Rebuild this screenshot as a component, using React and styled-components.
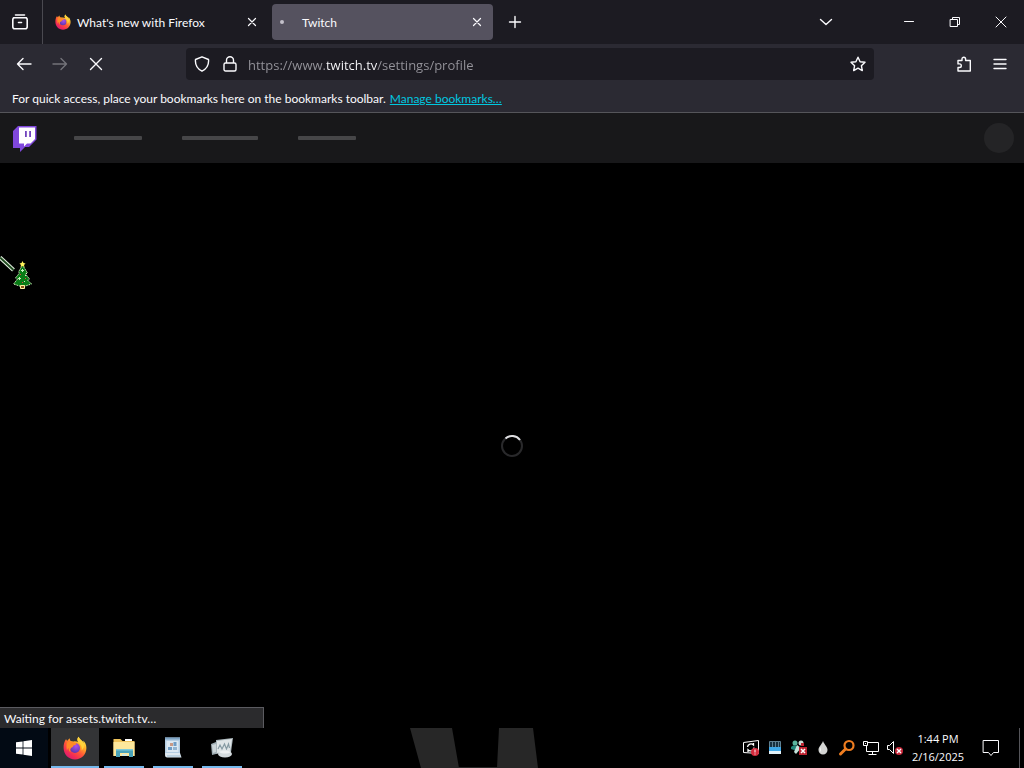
import React from 'react';
import styled, { createGlobalStyle, css } from 'styled-components';

const GlobalStyle = createGlobalStyle`
  *, *::before, *::after { box-sizing: border-box; }
  html, body { margin: 0; background: #000; }
  body, button, input {
    font-family: Lato, "Open Sans", sans-serif;
    font-size: 12px;
    line-height: 16px;
    color: #fbfbfe;
  }
  svg { display: block; flex: none; }
`;

const Desktop = styled.div`
  display: flex;
  flex-direction: column;
  min-height: 100vh;
`;

const IconButton = styled.button`
  display: flex;
  align-items: center;
  justify-content: center;
  flex: none;
  width: ${(p) => p.$w || 32}px;
  height: ${(p) => p.$h || 32}px;
  padding: 0;
  border: 0;
  border-radius: 4px;
  background: transparent;
  color: #fbfbfe;
  &:disabled { color: #74737a; }
`;

/* Title bar */
const TitleBar = styled.header`
  display: flex;
  align-items: center;
  height: 44px;
  background: #1c1b22;
`;

const ViewSlot = styled.div`
  display: flex;
  align-items: center;
  align-self: stretch;
  padding: 0 6px 0 4px;
  border-right: 1px solid #4a4950;
`;

const TabList = styled.div`
  display: flex;
  gap: 4px;
  padding: 0 6px 0 4px;
`;

const Tab = styled.div`
  display: flex;
  align-items: center;
  width: 221px;
  height: 36px;
  padding: 0 4px 0 8px;
  border-radius: 4px;
  background: ${(p) => (p.$active ? '#55525f' : 'transparent')};
`;

const TabIcon = styled.span`
  display: flex;
  width: 16px;
  height: 16px;
  margin-right: 6px;
`;

const TabTitle = styled.span`
  flex: 1;
  padding-top: 1px;
  white-space: nowrap;
`;

const WindowControls = styled.div`
  display: flex;
  margin-left: 44px;
`;

const Spacer = styled.div`
  flex: 1;
`;

/* Navigation bar */
const NavBar = styled.nav`
  display: flex;
  align-items: center;
  gap: 4px;
  height: 40px;
  padding: 0 8px;
  background: #2b2a33;
`;

const UrlBar = styled.label`
  display: flex;
  align-items: center;
  flex: 1;
  height: 32px;
  margin: 0 70px;
  border-radius: 4px;
  background: #1c1b22;
`;

const UrlIcon = styled.span`
  display: flex;
  justify-content: center;
  width: ${(p) => p.$w}px;
`;

const UrlInput = styled.input`
  flex: 1;
  min-width: 0;
  height: 24px;
  padding: 2px 0 0;
  margin-left: 6px;
  border: 0;
  outline: 0;
  font-family: "Open Sans", sans-serif;
  font-size: 13px;
  background: linear-gradient(90deg, #96959c 78px, #fbfbfe 78px, #fbfbfe 129px, #96959c 129px);
  -webkit-background-clip: text;
  background-clip: text;
  -webkit-text-fill-color: transparent;
`;

const BookmarksBar = styled.div`
  display: flex;
  align-items: center;
  gap: 4px;
  height: 29px;
  padding: 1px 12px 0;
  background: #2b2a33;
  border-bottom: 1px solid #55555a;
  white-space: nowrap;
`;

const BookmarkLink = styled.a`
  color: #00c8e0;
  text-decoration: underline;
`;

/* Page */
const SiteHeader = styled.header`
  display: flex;
  align-items: center;
  height: 50px;
  padding: 0 10px 0 12px;
  background: #18181a;
`;

const Placeholders = styled.div`
  display: flex;
  gap: 40px;
  flex: 1;
  margin-left: 37px;
`;

const Placeholder = styled.div`
  width: ${(p) => p.$w}px;
  height: 4px;
  border-radius: 1px;
  background: #464648;
`;

const Avatar = styled.div`
  width: 30px;
  height: 30px;
  border-radius: 50%;
  background: #242426;
`;

const Page = styled.main`
  position: relative;
  display: flex;
  align-items: center;
  justify-content: center;
  flex: 1;
  background: #000;
`;

const Status = styled.div`
  position: absolute;
  left: 0;
  bottom: 0;
  width: 264px;
  padding: 3px 4px 1px;
  border: solid #5b5b60;
  border-width: 1px 1px 0 0;
  background: #2b2b2d;
`;

const Pointer = styled.svg`
  position: absolute;
  left: 0;
  top: 93px;
`;

/* Taskbar */
const Taskbar = styled.footer`
  display: grid;
  grid-template-columns: 40% 128px 1fr;
  height: 40px;
  background: #000;
`;

const Apps = styled.div`
  display: flex;
  gap: 1px;
`;

const AppButton = styled.button`
  display: flex;
  align-items: center;
  justify-content: center;
  width: 48px;
  height: 40px;
  padding: 0;
  border: 0;
  background: ${(p) => (p.$active ? '#333436' : 'transparent')};
  ${(p) => p.$start && css`
    margin-right: 2px;
    background: #020a14;
  `}
  ${(p) => p.$open && css`
    background-image: linear-gradient(#76b9ed, #76b9ed);
    background-repeat: no-repeat;
    background-position: center bottom;
    background-size: ${p.$active ? 48 : 40}px 2px;
  `}
`;

const Tray = styled.div`
  display: flex;
  align-items: center;
  justify-content: flex-end;
`;

const TrayClock = styled.time`
  width: 62px;
  text-align: center;
  font-family: "Open Sans", sans-serif;
  font-size: 11px;
  line-height: 18px;
  white-space: nowrap;
`;

const ShowDesktop = styled.button`
  width: 5px;
  height: 40px;
  margin-left: 6px;
  padding: 0;
  border: 0;
  border-left: 1px solid #55555a;
  background: transparent;
`;

const Line = ({ size = 16, width = 1.4, children, ...rest }) => (
  <svg width={size} height={size} viewBox={`0 0 ${size} ${size}`} fill="none" stroke="currentColor"
    strokeWidth={width} strokeLinecap="round" strokeLinejoin="round" aria-hidden="true" {...rest}>
    {children}
  </svg>
);

const FirefoxLogo = ({ size, id }) => (
  <svg width={size} height={size} viewBox="0 0 24 24" aria-hidden="true">
    <defs>
      <linearGradient id={`${id}-body`} x1="0.85" y1="0.05" x2="0.2" y2="0.95">
        <stop offset="0" stopColor="#fff44f" />
        <stop offset="0.3" stopColor="#ffad27" />
        <stop offset="0.55" stopColor="#ff5a36" />
        <stop offset="0.8" stopColor="#f32c55" />
        <stop offset="1" stopColor="#d91b72" />
      </linearGradient>
      <radialGradient id={`${id}-globe`} cx="0.6" cy="0.3" r="0.8">
        <stop offset="0" stopColor="#a950ee" />
        <stop offset="1" stopColor="#5634a5" />
      </radialGradient>
    </defs>
    <path fill={`url(#${id}-body)`} d="M15.6.8c-1.500 1.700-1.600 3.500-.5 5.200-1.200-.6-3-.9-4.500-.6L7.800 5C7 4.400 6.700 3.300 6.800 2.200 5.700 2.800 4.900 3.800 4.400 4.700 3.600 4.500 3.200 3.800 3.100 3 1.200 5.500.5 8.600.6 12c.1 6.500 5 11.500 11.400 11.500 6.500 0 11.400-5 11.400-11.500 0-3.400-1.500-6.100-3.400-7.500.4.900.6 1.800.6 2.500C19.400 4.300 16.500 3.600 15.600.8Z" />
    <circle cx="12" cy="12" r="5" fill={`url(#${id}-globe)`} />
    <path fill="#ff8a26" d="M4.200 6.200c2.200-.9 4.700-.6 6.500.6l2.600.5c.7.400-.1 1.500-1.900 1.900-1.300.4-1.800 1-1.400 1.700-1.400.2-2.500 1.300-2.800 2.600-.2.900 0 1.900.4 2.700-1.500-.9-2.200-2.400-1.900-4.200-1 .4-1.700 1.700-1.700 3.300C3.500 11.200 3.100 8.400 4.200 6.200Z" />
    <path fill="#ffd23c" d="M15.600.8c-1.500 1.700-1.600 3.700 0 5.700 2.400 2 3.800 4.700 3 8 2.700-2.400 3.100-6.300 2-7.500C19.400 4.300 16.500 3.600 15.600.8Z" />
  </svg>
);

const TwitchLogo = () => (
  <svg width="25" height="29" viewBox="0 0 25 29" role="img" aria-label="Twitch">
    <path fill="#8048dc" d="M6 2h18.500v13.500L17 23h-4l-5 5v-4H1V7Z" />
    <path fill="#fff" d="M7 3.500h16v11.500l-4.500 4.500H15l-3 3v-3H7Z" />
    <path fill="#7143bd" d="M13 7h1.800v6H13zM17.200 7H19v6h-1.800z" />
  </svg>
);

const TreePointer = () => (
  <Pointer width="36" height="36" viewBox="0 0 36 36" aria-hidden="true">
    <path d="M0 1.500 13.500 14" stroke="#e8f5e4" strokeWidth="4" />
    <path d="M0 1.500 13.500 14" stroke="#204a20" strokeWidth="2" />
    <path fill="#087c16" stroke="#e4f5cc" strokeWidth="1" strokeDasharray="1.500 1" d="m22.500 9 5 8-2 1 4 5-2 1 4 4-6 2h-6l-6-2 4-5-2-1 4-5-1-1Z" />
    <path fill="#fff35c" d="m22.500 5 1 2 2 .5-1.500 1.500.5 2-2-1-2 1 .5-2L19.500 7.500l2-.5Z" />
    <path fill="#8c5520" stroke="#fff2a0" d="M20.500 29.500h4v3h-4z" />
    <path fill="#c6f4bd" d="M22 13h1v3h-1zM21 14h3v1h-3zM19 21h1v3h-1zM18 22h3v1h-3zM25 19h1v1h-1zM24 25h1v1h-1z" />
    <path fill="#e23c3c" d="M20 18h1v1h-1zM25 22h1v1h-1zM22 26h1v1h-1z" />
  </Pointer>
);

const Spinner = () => (
  <svg width="24" height="24" viewBox="0 0 24 24" fill="none" role="img" aria-label="Loading">
    <circle cx="12" cy="12" r="10" stroke="#29292b" strokeWidth="2" />
    <path d="M5.500 4.400A10 10 0 0 1 20 6" stroke="#dedee0" strokeWidth="2" />
  </svg>
);

const WindowsLogo = () => (
  <svg width="16" height="16" viewBox="0 0 16 16" fill="#fff" aria-hidden="true">
    <path d="M0 2.300 6.600 1.400v6.200H0zM7.400 1.300 16 0v7.600H7.400zM0 8.400h6.600v6.200L0 13.700zM7.400 8.400H16V16l-8.600-1.300z" />
  </svg>
);

const ExplorerIcon = () => (
  <svg width="24" height="24" viewBox="0 0 24 24" aria-hidden="true">
    <path fill="#efc35c" d="M1.500 3h7l2 2h12v15h-21z" />
    <path fill="#fde79c" d="M1.500 6h21v14h-21z" />
    <path fill="#fff" d="M13 3h7v2h-7z" />
    <path fill="#4aa3b8" d="M4 13h17v8h-4v-4H8v4H4z" />
    <path fill="#7ec9d8" d="M4 13h17v1.500H4z" />
    <path fill="#cfe9e2" d="M10 18h5v2h-5z" />
  </svg>
);

const InstallerIcon = () => (
  <svg width="24" height="24" viewBox="0 0 24 24" aria-hidden="true">
    <path fill="#b4cde2" d="M4 1.500h15V18H4z" />
    <path fill="#7da3c4" d="M4 1.500h15v2H4z" />
    <path fill="#dce8f2" d="M5.500 5h12v11h-12z" />
    <path fill="#c99a86" d="M9 7h3v3H9z" />
    <path fill="#6f9cc4" d="M12.500 6h3v4h-3zM7 11h4v3H7z" />
    <path fill="#93b4d0" d="M12 11h4v3h-4z" />
    <path fill="#dfe9f0" d="M4.500 17h14.500l1.500 4.500H6c-2 0-2.500-3-1.500-4.500Z" />
    <path fill="#9dbdd4" d="M6 19.500h13.500v1H6z" />
  </svg>
);

const MonitorIcon = () => (
  <svg width="24" height="24" viewBox="0 0 24 24" aria-hidden="true">
    <path fill="#aab6bb" d="m6 4 17-2-2 14-15 2z" />
    <path fill="#dfe5e7" d="m7 5 15-2-2 12-13 2z" />
    <path fill="#9eacb2" d="m1 8 5-2v12l-4 1z" />
    <path fill="#cbd4d8" d="m2 9 4-1v8l-3 1z" />
    <path fill="none" stroke="#8499a2" strokeWidth="1.200" d="m8 13 2-4 2 4 2.500-5 2 5 2-5 1 4" />
    <ellipse cx="15" cy="18" rx="7" ry="3.500" fill="#d4dbde" />
    <path fill="#eef1f2" d="M9 16c3-2 8-2 12 0-3 2-9 2-12 0Z" />
  </svg>
);

const Wallpaper = () => (
  <svg width="100%" height="40" viewBox="0 0 128 40" preserveAspectRatio="none" fill="#272727" aria-hidden="true">
    <path d="M0 0h42l7 40H11zM89 0h34l5 40H87zM48 39h39v1H48z" />
  </svg>
);

const TrayIcon = ({ children }) => (
  <IconButton as="span" $w={24} $h={40}>
    <svg width="18" height="18" viewBox="0 0 18 18" fill="none" aria-hidden="true">{children}</svg>
  </IconButton>
);

export default function App() {
  return (
    <Desktop>
      <GlobalStyle />
      <TitleBar>
        <ViewSlot>
          <IconButton aria-label="Firefox View">
            <Line width={1.600}><path d="M3.500 1h9M1.500 3.800h13M2.800 3.800h10.400c1.200 0 2 .8 2 2v7c0 1.200-.8 2-2 2H2.800c-1.200 0-2-.8-2-2v-7c0-1.200.8-2 2-2ZM6.500 8.500h3" /></Line>
          </IconButton>
        </ViewSlot>
        <TabList role="tablist">
          <Tab role="tab" aria-selected="false">
            <TabIcon><FirefoxLogo size={16} id="tab" /></TabIcon>
            <TabTitle>What's new with Firefox</TabTitle>
            <IconButton $w={24} $h={24} aria-label="Close tab">
              <Line width={1.200}><path d="m4.500 4.500 7 7M11.500 4.500l-7 7" /></Line>
            </IconButton>
          </Tab>
          <Tab role="tab" aria-selected="true" $active>
            <TabIcon>
              <svg width="16" height="16" viewBox="0 0 16 16" aria-hidden="true"><circle cx="2" cy="8" r="2" fill="#c3c1ca" /></svg>
            </TabIcon>
            <TabTitle>Twitch</TabTitle>
            <IconButton $w={24} $h={24} aria-label="Close tab">
              <Line width={1.200}><path d="m4.500 4.500 7 7M11.500 4.500l-7 7" /></Line>
            </IconButton>
          </Tab>
        </TabList>
        <IconButton aria-label="New tab"><Line><path d="M8 2.500v11M2.500 8h11" /></Line></IconButton>
        <Spacer />
        <IconButton aria-label="List all tabs"><Line><path d="m2.500 5.500 5.500 5 5.500-5" /></Line></IconButton>
        <WindowControls>
          <IconButton $w={46} $h={44} aria-label="Minimize"><Line width={1}><path d="M3.500 7.500h9" /></Line></IconButton>
          <IconButton $w={46} $h={44} aria-label="Restore">
            <Line width={1} strokeLinejoin="miter"><path d="M3.500 5.500h7v7h-7zM5.500 5.500v-2h7v7h-2" /></Line>
          </IconButton>
          <IconButton $w={46} $h={44} aria-label="Close"><Line width={1}><path d="m3 3 10 10M13 3 3 13" /></Line></IconButton>
        </WindowControls>
      </TitleBar>

      <NavBar aria-label="Navigation">
        <IconButton aria-label="Back"><Line><path d="M15 8H1.500M7 2.500 1.500 8 7 13.500" /></Line></IconButton>
        <IconButton disabled aria-label="Forward"><Line><path d="M1 8h13.500M9 2.500l5.500 5.500L9 13.500" /></Line></IconButton>
        <IconButton aria-label="Stop"><Line><path d="m2.500 2.500 11 11M13.500 2.500l-11 11" /></Line></IconButton>
        <UrlBar>
          <UrlIcon $w={32}><Line><path d="M8 .8 14.500 3.500C15 8.500 12.500 13 8 15.200 3.500 13 1 8.500 1.500 3.500Z" /></Line></UrlIcon>
          <UrlIcon $w={24}><Line><path d="M3.500 7h9c.8 0 1.500.7 1.500 1.500v5c0 .8-.7 1.500-1.500 1.500h-9C2.700 15 2 14.300 2 13.500v-5C2 7.700 2.700 7 3.500 7ZM4.500 7V4.300a3.500 3.500 0 0 1 7 0V7" /></Line></UrlIcon>
          <UrlInput aria-label="Address" defaultValue="https://www.twitch.tv/settings/profile" />
          <IconButton aria-label="Bookmark this page">
            <Line><path d="m8 1.200 2.100 4.500 4.900.6-3.600 3.400.9 4.900L8 12.200l-4.300 2.400.9-4.900L1 6.300l4.900-.6Z" /></Line>
          </IconButton>
        </UrlBar>
        <IconButton aria-label="Extensions">
          <Line><path d="M2 4.500h4V3a1.800 1.800 0 0 1 3.600 0v1.500H14.300V15H2v-3.500h1.500a1.800 1.800 0 0 0 0-3.600H2Z" /></Line>
        </IconButton>
        <IconButton aria-label="Open menu"><Line><path d="M2 3.500h12M2 8h12M2 12.500h12" /></Line></IconButton>
      </NavBar>

      <BookmarksBar>
        <span>For quick access, place your bookmarks here on the bookmarks toolbar.</span>
        <BookmarkLink href="#bookmarks">Manage bookmarks…</BookmarkLink>
      </BookmarksBar>

      <SiteHeader>
        <TwitchLogo />
        <Placeholders>
          <Placeholder $w={68} />
          <Placeholder $w={76} />
          <Placeholder $w={58} />
        </Placeholders>
        <Avatar />
      </SiteHeader>

      <Page>
        <Spinner />
        <TreePointer />
        <Status role="status">Waiting for assets.twitch.tv…</Status>
      </Page>

      <Taskbar>
        <Apps>
          <AppButton $start aria-label="Start"><WindowsLogo /></AppButton>
          <AppButton $open $active aria-label="Firefox"><FirefoxLogo size={24} id="task" /></AppButton>
          <AppButton $open aria-label="File Explorer"><ExplorerIcon /></AppButton>
          <AppButton $open aria-label="Installer"><InstallerIcon /></AppButton>
          <AppButton $open aria-label="Computer"><MonitorIcon /></AppButton>
        </Apps>
        <Wallpaper />
        <Tray>
          <TrayIcon>
            <path stroke="#fff" d="M1.500 3.500 16.500 1.500v13l-15-1z" />
            <path stroke="#fff" strokeWidth="1.300" d="M5.500 8a3.500 3.500 0 0 1 6-2V4M12 8.500a3.500 3.500 0 0 1-6 2.300V13" />
            <circle cx="13" cy="13" r="4" fill="#d52b3d" />
            <path stroke="#fff" d="M13 10.500v3M13 14.500v1" />
          </TrayIcon>
          <TrayIcon>
            <path fill="#16303f" stroke="#5f7f90" d="M3.500 2.500h11v6h-11z" />
            <path stroke="#5f7f90" d="M6.500 2v6M9.500 2v6M12.500 2v6" />
            <path fill="#3fa9e8" d="M3 8h12v4H3z" />
            <path fill="#e3f1f8" d="M3 12h12v3H3z" />
          </TrayIcon>
          <TrayIcon>
            <circle cx="5" cy="4" r="2.500" fill="#5bb59e" />
            <circle cx="11" cy="4" r="2.500" fill="#c9ddd6" />
            <path fill="#238578" d="M1 8c3-3 6-2 8 1l-2 3-6-2z" />
            <path fill="#c4e4db" d="m7 6 4 3-5 6-2-2z" />
            <path fill="#bc2330" d="M9 8h8v8H9zM11 4h3v3h-3z" />
            <path stroke="#fff" strokeWidth="1.500" d="m11 10 4 4M15 10l-4 4" />
          </TrayIcon>
          <TrayIcon>
            <path fill="#d4d5d3" d="M9 2c1.500 4 4.500 5.500 4.500 9a4.500 4.500 0 0 1-9 0C4.500 7.500 7.500 6 9 2Z" />
            <path fill="#fff" d="M7 8c-1 2-1 4 0 5z" />
          </TrayIcon>
          <TrayIcon>
            <circle cx="11" cy="6.500" r="4.500" stroke="#ef7d20" strokeWidth="2.200" />
            <path stroke="#ef7d20" strokeWidth="3" strokeLinecap="round" d="m7.500 10-5 5" />
          </TrayIcon>
          <TrayIcon>
            <path stroke="#fff" d="M5.500 3.500h11v9H4.500V6.500M10.500 12.500v3M6.500 15.500h8M1.500 2.500h4v4h-4zM3 4.500h1" />
          </TrayIcon>
          <TrayIcon>
            <path stroke="#fff" d="M1.500 6.500h2l4-4v12l-4-4h-2z" />
            <circle cx="13" cy="12" r="4" fill="#c8283a" />
            <path stroke="#fff" strokeWidth="1.400" d="m11 10 4 4M15 10l-4 4" />
          </TrayIcon>
          <TrayClock dateTime="2025-02-16T13:44">1:44 PM<br />2/16/2025</TrayClock>
          <IconButton $w={44} $h={40} aria-label="Notifications">
            <Line size={18} width={1} strokeLinejoin="miter"><path d="M1.500 1.500h15v12h-5l-2.500 3-2.500-3h-5z" /></Line>
          </IconButton>
          <ShowDesktop aria-label="Show desktop" />
        </Tray>
      </Taskbar>
    </Desktop>
  );
}
